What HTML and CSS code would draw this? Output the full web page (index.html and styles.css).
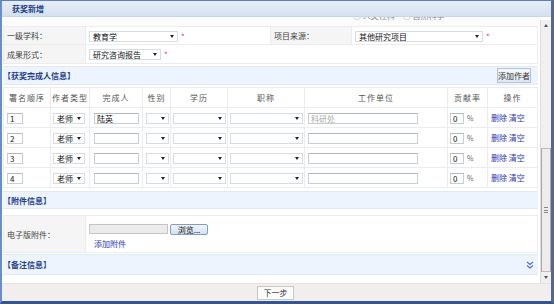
FILE: index.html
```html
<!DOCTYPE html>
<html lang="zh-CN">
<head>
  <meta charset="UTF-8">
  <meta name="viewport" content="width=device-width, initial-scale=1.0">
  <title>获奖新增</title>
  <link rel="stylesheet" href="styles.css">
</head>
<body>
  <div class="window">
    <div class="title-bar">获奖新增</div>
    <div class="window-body">
      <div class="content">
        <div class="cut-row"><span class="cut-text">○ 人文社科　○ 自然科学</span></div>

        <table class="form-table">
          <colgroup>
            <col class="c-label"><col class="c-value"><col class="c-label2"><col>
          </colgroup>
          <tr class="row-1">
            <td class="label">一级学科：</td>
            <td><span class="sel w-subject">教育学</span><span class="req">*</span></td>
            <td class="label">项目来源：</td>
            <td><span class="sel w-source">其他研究项目</span><span class="req">*</span></td>
          </tr>
          <tr class="row-2">
            <td class="label">成果形式：</td>
            <td colspan="3"><span class="sel w-form">研究咨询报告</span><span class="req">*</span></td>
          </tr>
        </table>

        <div class="section">
          <span>【获奖完成人信息】</span>
          <button class="btn btn-small">添加作者</button>
        </div>

        <table class="author-table">
          <colgroup>
            <col class="a1"><col class="a2"><col class="a3"><col class="a4"><col class="a5">
            <col class="a6"><col class="a7"><col class="a8"><col>
          </colgroup>
          <tr class="head">
            <th>署名顺序</th><th>作者类型</th><th>完成人</th><th>性别</th><th>学历</th>
            <th>职称</th><th>工作单位</th><th>贡献率</th><th>操作</th>
          </tr>
          <tr>
            <td class="p3"><span class="inp w-order">1</span></td>
            <td><span class="sel w-type">老师</span></td>
            <td class="p4"><span class="inp w-name">陆英</span></td>
            <td class="p3"><span class="sel w-sex"></span></td>
            <td><span class="sel w-edu"></span></td>
            <td><span class="sel w-rank"></span></td>
            <td class="p3"><span class="inp w-unit hint">科研处</span></td>
            <td><span class="inp w-rate">0</span><span class="pct">%</span></td>
            <td class="p3 ops"><a href="#">删除</a> <a href="#">清空</a></td>
          </tr>
          <tr>
            <td class="p3"><span class="inp w-order">2</span></td>
            <td><span class="sel w-type">老师</span></td>
            <td class="p4"><span class="inp w-name"></span></td>
            <td class="p3"><span class="sel w-sex"></span></td>
            <td><span class="sel w-edu"></span></td>
            <td><span class="sel w-rank"></span></td>
            <td class="p3"><span class="inp w-unit"></span></td>
            <td><span class="inp w-rate">0</span><span class="pct">%</span></td>
            <td class="p3 ops"><a href="#">删除</a> <a href="#">清空</a></td>
          </tr>
          <tr>
            <td class="p3"><span class="inp w-order">3</span></td>
            <td><span class="sel w-type">老师</span></td>
            <td class="p4"><span class="inp w-name"></span></td>
            <td class="p3"><span class="sel w-sex"></span></td>
            <td><span class="sel w-edu"></span></td>
            <td><span class="sel w-rank"></span></td>
            <td class="p3"><span class="inp w-unit"></span></td>
            <td><span class="inp w-rate">0</span><span class="pct">%</span></td>
            <td class="p3 ops"><a href="#">删除</a> <a href="#">清空</a></td>
          </tr>
          <tr>
            <td class="p3"><span class="inp w-order">4</span></td>
            <td><span class="sel w-type">老师</span></td>
            <td class="p4"><span class="inp w-name"></span></td>
            <td class="p3"><span class="sel w-sex"></span></td>
            <td><span class="sel w-edu"></span></td>
            <td><span class="sel w-rank"></span></td>
            <td class="p3"><span class="inp w-unit"></span></td>
            <td><span class="inp w-rate">0</span><span class="pct">%</span></td>
            <td class="p3 ops"><a href="#">删除</a> <a href="#">清空</a></td>
          </tr>
        </table>

        <div class="section section-2"><span>【附件信息】</span></div>

        <table class="form-table file-table">
          <colgroup><col class="c-label"><col></colgroup>
          <tr>
            <td class="label">电子版附件：</td>
            <td>
              <div class="file-line">
                <span class="file-box"></span><button class="btn btn-browse">浏览...</button>
              </div>
              <a href="#" class="add-file">添加附件</a>
            </td>
          </tr>
        </table>

        <div class="section section-3">
          <span>【备注信息】</span>
          <svg class="chevron" width="8" height="8" viewBox="0 0 8 8">
            <path d="M1 1 L4 3.5 L7 1 M1 4.5 L4 7 L7 4.5" fill="none" stroke="#4a6fd0" stroke-width="1.1"/>
          </svg>
        </div>
      </div>

      <div class="scrollbar">
        <div class="sb-arrow sb-up"></div>
        <div class="sb-track"></div>
        <div class="sb-thumb"><span class="grip"></span></div>
        <div class="sb-arrow sb-down"></div>
      </div>
    </div>
    <div class="footer">
      <button class="btn btn-next">下一步</button>
    </div>
  </div>
</body>
</html>
```

FILE: styles.css
```css
body {
  margin: 0;
  padding: 0;
  font-family: "Noto Sans CJK SC", "Noto Sans", sans-serif;
  font-size: 8px;
  color: #333;
  background: #fff;
}
.window {
  width: 554px;
  height: 304px;
  box-sizing: border-box;
  border-top: 1px solid #5d7fbf;
  border-left: 2px solid #6b8cc6;
  border-right: 3px solid #55698e;
  border-bottom: 3px solid #34558f;
  display: flex;
  flex-direction: column;
  overflow: hidden;
}
.title-bar {
  height: 16px;
  flex: none;
  line-height: 16px;
  padding-left: 10px;
  font-weight: bold;
  color: #1e4088;
  background: linear-gradient(#e6edf6, #d6e1ef);
  border-bottom: 1px solid #c9d6e8;
  box-sizing: border-box;
}
.window-body {
  flex: 1;
  display: flex;
  min-height: 0;
  background: #fff;
}
.content {
  flex: 1;
  overflow: hidden;
  padding-left: 1px;
}
.cut-row {
  height: 9px;
  overflow: hidden;
  background: #fbfbfb;
}
.cut-text {
  display: block;
  margin: -7px 0 0 350px;
  color: #888;
}

/* form rows */
.form-table {
  width: 535px;
  border-collapse: collapse;
  table-layout: fixed;
}
.form-table td {
  border: 1px solid #ececec;
  padding: 0 0 0 3px;
  white-space: nowrap;
}
.form-table .label {
  background: #f5f5f5;
  color: #444;
}
.c-label { width: 82px; }
.c-value { width: 185px; }
.c-label2 { width: 81px; }
.row-1 td { height: 17px; }
.row-2 td { height: 18px; }
.req {
  color: #e2343f;
  margin-left: 3px;
  vertical-align: middle;
}

/* select and input */
.sel {
  display: inline-flex;
  align-items: center;
  vertical-align: middle;
  height: 11px;
  box-sizing: border-box;
  border: 1px solid #d6dce4;
  background: #fff;
  color: #111;
  padding-left: 3px;
  line-height: 9px;
}
.sel::after {
  content: "";
  margin-left: auto;
  margin-right: 3px;
  border-left: 2px solid transparent;
  border-right: 2px solid transparent;
  border-top: 3px solid #222;
}
.inp {
  display: inline-block;
  vertical-align: middle;
  height: 11px;
  box-sizing: border-box;
  border: 1px solid #c8ced6;
  border-top-color: #b0b8c2;
  background: #fff;
  color: #111;
  padding-left: 2px;
  line-height: 9px;
}
.hint { color: #aaa; }
.w-subject { width: 89px; }
.w-source { width: 128px; }
.w-form { width: 72px; }
.w-order { width: 16px; }
.w-type { width: 32px; }
.w-name { width: 45px; }
.w-sex { width: 23px; }
.w-edu { width: 53px; }
.w-rank { width: 73px; }
.w-unit { width: 110px; }
.w-rate { width: 14px; }

/* section bands */
.section {
  width: 535px;
  height: 19px;
  box-sizing: border-box;
  margin-top: 2px;
  display: flex;
  align-items: center;
  justify-content: space-between;
  padding: 0 7px 0 0;
  background: #edf4fd;
  border-top: 1px solid #e0e9f4;
  border-bottom: 1px solid #e0e9f4;
  color: #1f3f8d;
  font-weight: bold;
}
.section-2 {
  margin-top: 3px;
  height: 18px;
}
.section-3 {
  height: 21px;
  margin-top: 1px;
}
.btn {
  font-family: inherit;
  font-size: 8px;
  color: #333;
  padding: 0;
  cursor: pointer;
}
.btn-small {
  width: 34px;
  height: 15px;
  background: linear-gradient(#f4f7fb, #dfe7f1);
  border: 1px solid #b3c2d6;
}

/* author table */
.author-table {
  width: 535px;
  margin-top: 2px;
  border-collapse: collapse;
  table-layout: fixed;
}
.author-table th,
.author-table td {
  height: 19px;
  border: 1px solid #ececec;
  padding: 0 0 0 2px;
  white-space: nowrap;
}
.author-table th {
  font-weight: normal;
  color: #555;
  letter-spacing: 1px;
  text-align: center;
  padding: 0;
}
.author-table .p3 { padding-left: 3px; }
.author-table .p4 { padding-left: 4px; }
.a1 { width: 47px; }
.a2 { width: 39px; }
.a3 { width: 53px; }
.a4 { width: 28px; }
.a5 { width: 57px; }
.a6 { width: 77px; }
.a7 { width: 143px; }
.a8 { width: 40px; }
.pct {
  margin-left: 3px;
  color: #666;
  font-size: 7px;
  vertical-align: middle;
}
.ops a,
.add-file {
  color: #2636b8;
  text-decoration: none;
}

/* attachments */
.file-table {
  margin-top: 6px;
}
.file-table td {
  height: 36px;
}
.file-line {
  display: flex;
  align-items: center;
  gap: 2px;
  margin-top: 4px;
}
.file-box {
  width: 79px;
  height: 10px;
  background: #ebebeb;
  border: 1px solid #c4c4c4;
  box-sizing: border-box;
}
.btn-browse {
  width: 38px;
  height: 11px;
  line-height: 9px;
  background: linear-gradient(#f2f6fb, #d3e0ef);
  border: 1px solid #7f9ec7;
  border-radius: 2px;
  color: #111;
}
.add-file {
  display: inline-block;
  margin: 3px 0 0 5px;
}
.chevron {
  display: block;
  margin-right: -3px;
}

/* scrollbar */
.scrollbar {
  width: 10px;
  flex: none;
  margin-top: 3px;
  display: flex;
  flex-direction: column;
  background: #f0f0f0;
  border-left: 1px solid #dcdcdc;
}
.sb-arrow {
  height: 11px;
  display: flex;
  align-items: center;
  justify-content: center;
}
.sb-up::after {
  content: "";
  border-left: 2px solid transparent;
  border-right: 2px solid transparent;
  border-bottom: 3px solid #555;
}
.sb-down::after {
  content: "";
  border-left: 2px solid transparent;
  border-right: 2px solid transparent;
  border-top: 3px solid #555;
}
.sb-track {
  flex: 1;
}
.sb-thumb {
  height: 124px;
  box-sizing: border-box;
  background: #ececec;
  border-left: 1px solid #a9a9a9;
  border-right: 1px solid #a9a9a9;
  border-top: 1px solid #bdbdbd;
  border-bottom: 1px solid #bdbdbd;
  display: flex;
  align-items: center;
  justify-content: center;
}
.grip {
  width: 4px;
  height: 4px;
  border-top: 1px solid #888;
  border-bottom: 1px solid #888;
  background: linear-gradient(#888, #888) center / 4px 1px no-repeat;
}

/* footer */
.footer {
  height: 18px;
  flex: none;
  display: flex;
  align-items: center;
  justify-content: center;
  background: #f2eeee;
  border-top: 1px solid #e6e2e2;
  box-sizing: border-box;
}
.btn-next {
  width: 37px;
  height: 14px;
  background: #fbfbfb;
  border: 1px solid #c8c8c8;
  margin-left: -2px;
}
```
